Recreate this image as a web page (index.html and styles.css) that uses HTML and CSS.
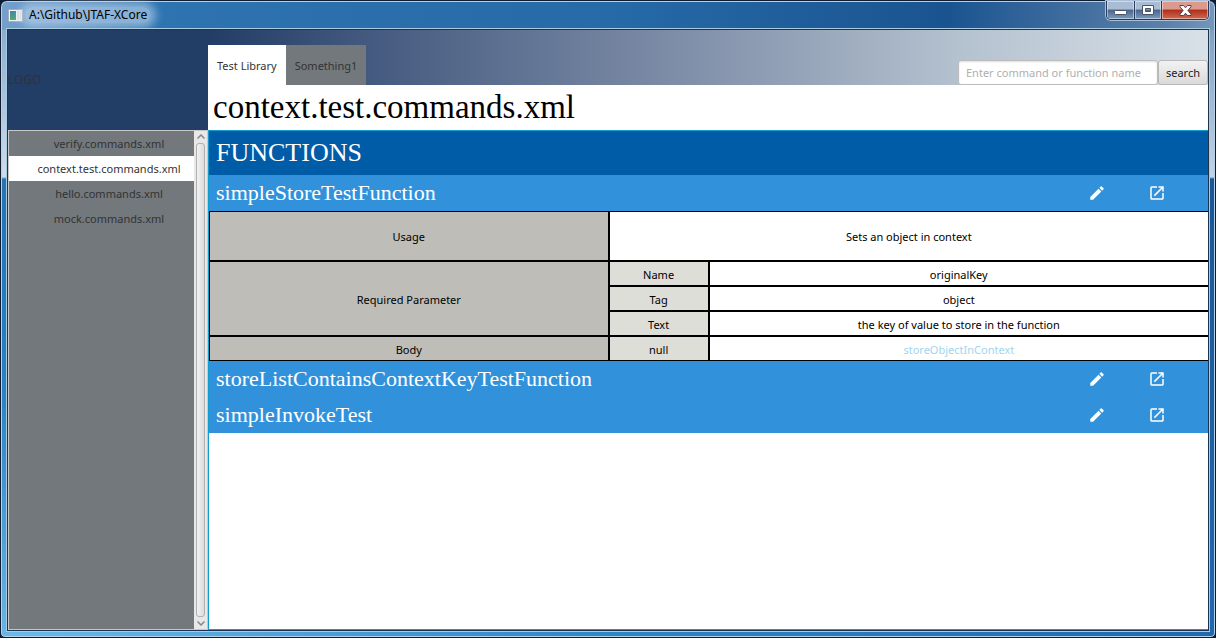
FILE: index.html
```
<!DOCTYPE html>
<html lang="en">
<head>
<meta charset="utf-8">
<title>A:\Github\JTAF-XCore</title>
<link rel="stylesheet" href="styles.css">
</head>
<body>
<svg class="sprite" width="0" height="0" aria-hidden="true">
  <symbol id="pencil" viewBox="0 0 24 24"><path d="M3 17.25V21h3.75L17.81 9.94l-3.75-3.75L3 17.25zM20.71 7.04a1 1 0 0 0 0-1.41l-2.34-2.34a1 1 0 0 0-1.41 0l-1.83 1.83 3.75 3.75 1.83-1.83z"/></symbol>
  <symbol id="open" viewBox="0 0 24 24"><path d="M19 19H5V5h7V3H5a2 2 0 0 0-2 2v14a2 2 0 0 0 2 2h14c1.1 0 2-.9 2-2v-7h-2v7zM14 3v2h3.590l-9.830 9.830 1.410 1.410L19 6.410V10h2V3h-7z"/></symbol>
</svg>
<div class="window">
  <header class="titlebar">
    <svg class="app-icon" width="15" height="13" viewBox="0 0 15 13" aria-hidden="true">
      <rect x=".5" y=".5" width="14" height="12" fill="#f4f4f4" stroke="#a9adb1"/>
      <rect x="2" y="2" width="6" height="9" fill="url(#appfill)"/>
      <rect x="9" y="2" width="2" height="9" fill="#dfe5e5"/>
      <rect x="12" y="2" width="1" height="9" fill="#dfe5e5"/>
      <defs><linearGradient id="appfill" x1="0" y1="0" x2="0" y2="1"><stop offset="0" stop-color="#4a83a8"/><stop offset="1" stop-color="#4fa878"/></linearGradient></defs>
    </svg>
    <span class="window-title">A:\Github\JTAF-XCore</span>
    <div class="window-buttons">
      <button class="win-btn" type="button" aria-label="Minimize"><svg class="low" width="13" height="7" viewBox="0 0 13 7"><rect x=".5" y="1.500" width="12" height="4" rx="1" fill="#fff" stroke="#4b5366"/></svg></button>
      <button class="win-btn win-max" type="button" aria-label="Maximize"><svg width="12" height="10" viewBox="0 0 12 10"><path fill-rule="evenodd" d="M.5.5h11v9H.5zM3.500 3.500v3h5v-3z" fill="#fff" stroke="#4b5366"/></svg></button>
      <button class="win-btn win-close" type="button" aria-label="Close"><svg width="13" height="11" viewBox="0 0 13 11"><path d="M1 .5h3.500l2 2.300 2-2.300H12v1.300L8.900 5.500l3.100 3.700v1.300H8.500l-2-2.300-2 2.300H1V9.200l3.100-3.700L1 1.800z" fill="#fff" stroke="#563f4d"/></svg></button>
    </div>
  </header>
  <div class="client">
    <div class="logo">LOGO</div>
    <div class="banner">
      <nav class="tabs">
        <button class="tab selected" type="button">Test Library</button>
        <button class="tab" type="button">Something1</button>
      </nav>
      <form class="search">
        <input class="search-box" type="text" placeholder="Enter command or function name" aria-label="Enter command or function name">
        <button class="search-btn" type="button">search</button>
      </form>
    </div>
    <h1 class="page-title">context.test.commands.xml</h1>
    <aside class="sidebar">
      <nav class="files">
        <button class="file" type="button">verify.commands.xml</button>
        <button class="file selected" type="button">context.test.commands.xml</button>
        <button class="file" type="button">hello.commands.xml</button>
        <button class="file" type="button">mock.commands.xml</button>
      </nav>
      <div class="scrollbar" aria-hidden="true">
        <svg width="8" height="5" viewBox="0 0 8 5"><path d="M.5 4.500 4 1l3.500 3.500" class="arrow"/></svg>
        <div class="thumb"></div>
        <svg width="8" height="5" viewBox="0 0 8 5"><path d="M.5.5 4 4 7.500.5" class="arrow"/></svg>
      </div>
    </aside>
    <main class="content">
      <h2 class="section">FUNCTIONS</h2>
      <div class="function">
        <h3 class="function-name">simpleStoreTestFunction</h3>
        <button class="action" type="button" aria-label="Edit"><svg class="icon"><use href="#pencil"/></svg></button>
        <button class="action" type="button" aria-label="Open"><svg class="icon"><use href="#open"/></svg></button>
      </div>
      <table class="details">
        <colgroup><col class="col-head"><col class="col-key"><col></colgroup>
        <tr class="tall"><th class="head">Usage</th><td colspan="2">Sets an object in context</td></tr>
        <tr><th class="head" rowspan="3">Required Parameter</th><th class="key">Name</th><td>originalKey</td></tr>
        <tr><th class="key">Tag</th><td>object</td></tr>
        <tr><th class="key">Text</th><td>the key of value to store in the function</td></tr>
        <tr><th class="head">Body</th><th class="key">null</th><td><a class="link" href="#">storeObjectInContext</a></td></tr>
      </table>
      <div class="function">
        <h3 class="function-name">storeListContainsContextKeyTestFunction</h3>
        <button class="action" type="button" aria-label="Edit"><svg class="icon"><use href="#pencil"/></svg></button>
        <button class="action" type="button" aria-label="Open"><svg class="icon"><use href="#open"/></svg></button>
      </div>
      <div class="function">
        <h3 class="function-name">simpleInvokeTest</h3>
        <button class="action" type="button" aria-label="Edit"><svg class="icon"><use href="#pencil"/></svg></button>
        <button class="action" type="button" aria-label="Open"><svg class="icon"><use href="#open"/></svg></button>
      </div>
    </main>
  </div>
</div>
</body>
</html>
```
FILE: styles.css
```
* { box-sizing: border-box; }
body { margin: 0; background: #0a1c38; font: 11px/16px "Noto Sans", sans-serif; color: #000; }
button, input { font: inherit; color: inherit; margin: 0; border: 0; padding: 0; background: none; }
h1, h2, h3 { margin: 0; font-family: "Liberation Serif", serif; font-weight: normal; }
.sprite { display: block; }

.window {
  display: flex;
  flex-direction: column;
  min-height: 100vh;
  padding: 0 6px 6px;
  border: 1px solid #101c30;
  border-radius: 7px 7px 5px 5px;
  box-shadow: inset 0 0 0 1px #b4d2ea;
  background:
    linear-gradient(90deg, #76a0cc 0, #2e74b0 150px, #266aa8 50%, #1a5490 78%, #5c80aa 96%, #7696ba) top / 100% 29px no-repeat,
    linear-gradient(#7da4cd 0, #cfdcea 176px, #2473b4 178px, #2a80c0 60%, #68b4e6) left / 8px 100% no-repeat,
    linear-gradient(#7696ba 0, #c6d2e4 176px, #1a5696 178px, #2068b0) right / 8px 100% no-repeat,
    linear-gradient(90deg, #6cbaec, #2e86c4 50%, #2068b0);
}

.titlebar { display: flex; align-items: flex-start; height: 28px; padding-left: 1px; }
.app-icon { margin-top: 8px; }
.window-title { margin: 6px 0 0 2px; padding: 0 4px; border-radius: 8px; background: rgba(190, 214, 236, .6); box-shadow: 0 0 8px 5px rgba(190, 214, 236, .6); font-size: 12px; }
.window-buttons { display: flex; margin-left: auto; border: 1px solid #2b3b56; border-top: 0; border-radius: 0 0 5px 5px; box-shadow: 0 0 0 1px #a9bfd8; overflow: hidden; }
.win-btn { display: flex; align-items: center; justify-content: center; width: 27px; height: 18px; background: linear-gradient(#a9bcd4 45%, #48668c 50%, #7c9bc0); box-shadow: inset 0 0 0 1px rgba(255, 255, 255, .45); }
.low { margin-top: 5px; }
.win-max { border-left: 1px solid #2b3b56; }
.win-close { width: 47px; border-left: 1px solid #2b3b56; background: linear-gradient(#dc9a8c 45%, #b02e1c 50%, #cf6a50); }

.client {
  flex: 1;
  display: grid;
  grid-template: 55px 45px 1fr / 200px minmax(0, 1fr);
  border: 1px solid #1c3350;
  outline: 1px solid #a9cce2;
  background: #fff;
}
.logo { grid-row: 1 / 3; display: flex; align-items: center; background: #223d66; color: #333; font-size: 12px; }
.banner { display: flex; align-items: flex-end; justify-content: space-between; background: linear-gradient(90deg, #223d66, #40567c 14%, #8493ac 50%, #b4c1cf 75%, #d8e1e8); }
.tabs { display: flex; }
.tab { height: 40px; padding: 2px 9px 0; background: #72787c; color: #333; }
.tab.selected { background: #fff; }
.search { display: flex; }
.search-box { width: 200px; height: 25px; padding: 0 7px; border: 1px solid #bcbcbc; border-radius: 3px; background: #fff; box-shadow: inset 0 1px 2px #ddd; }
.search-box::placeholder { color: #afafaf; opacity: 1; }
.search-btn { width: 50px; height: 25px; border: 1px solid #b8b8b8; border-radius: 3px; background: linear-gradient(#f2f2f2, #dadada); color: #222; }
.page-title { padding-left: 5px; font-size: 33px; line-height: 45px; }

.sidebar { display: flex; border: 1px solid #c8c8c8; background: #72787c; }
.files { flex: 1; display: flex; flex-direction: column; }
.file { height: 25px; padding-left: 15px; color: #333; white-space: nowrap; }
.file.selected { background: #fff; }
.scrollbar { display: flex; flex-direction: column; align-items: center; gap: 4px; width: 13px; padding: 3px 0; background: #e8e8e8; }
.thumb { flex: 1; width: 9px; border: 1px solid #b0b0b0; border-radius: 3px; background: linear-gradient(90deg, #f2f2f2, #dcdcdc); }
.arrow { fill: none; stroke: #888; stroke-width: 1.500; }

.content { border: 1px solid #109cce; border-right: 0; background: #fff; }
.section { padding-left: 7px; background: #005ca7; color: #fff; font-size: 26px; line-height: 44px; }
.function { display: flex; align-items: center; height: 36px; padding: 0 21px 0 7px; background: #3192db; color: #fff; }
.function-name { flex: 1; font-size: 22px; line-height: 36px; }
.action { display: flex; align-items: center; justify-content: center; width: 60px; height: 36px; }
.icon { display: block; width: 18px; height: 18px; fill: #fff; }

.details { width: 100%; table-layout: fixed; border-collapse: separate; border-spacing: 0; text-align: center; }
.col-head { width: 40%; }
.col-key { width: 100px; }
.details th, .details td { height: 25px; padding: 2px 0 0; border: 1px solid #000; font-weight: normal; }
.details td { border-right: 0; }
.details .tall td, .details .tall th { height: 50px; }
.head { background: #bebdb8; }
.key { background: #deded9; }
.link { color: #9fd6ec; text-decoration: none; }
```
